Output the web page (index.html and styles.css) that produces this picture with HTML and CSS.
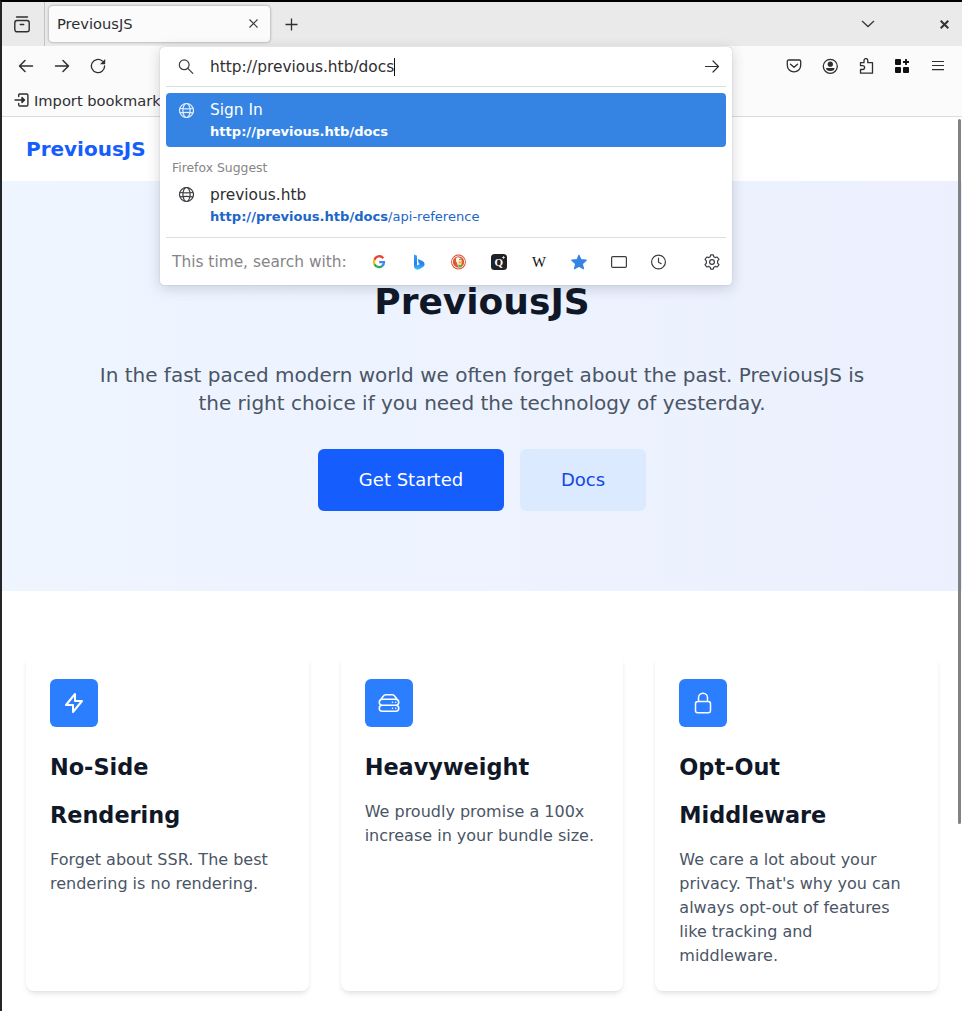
FILE: index.html
```html
<!DOCTYPE html>
<html lang="en">
<head>
<meta charset="utf-8">
<title>PreviousJS</title>
<link rel="stylesheet" href="styles.css">
</head>
<body>
<div class="window">
  <div class="tabbar">
    <div class="view-btn">
      <svg width="16" height="17" viewBox="0 0 16 17" fill="none" stroke="#2f2f33" stroke-width="1.4" stroke-linecap="round"><path d="M2.500 1h11"/><rect x=".8" y="4.500" width="14.400" height="11.300" rx="2.200"/><path d="M6.300 8.500h3.400"/></svg>
    </div>
    <div class="tab"><span>PreviousJS</span>
      <svg width="9" height="9" viewBox="0 0 9 9" stroke="#38383d" stroke-width="1.1"><path d="M.5.5l8 8M8.500.5l-8 8"/></svg>
    </div>
    <svg class="plus" width="13" height="13" viewBox="0 0 13 13" stroke="#2f2f33" stroke-width="1.3"><path d="M6.500 .5v12M.5 6.500h12"/></svg>
    <svg class="chev" width="14" height="8" viewBox="0 0 14 8" fill="none" stroke="#38383d" stroke-width="1.3"><path d="M1 1l6 5.500L13 1"/></svg>
    <svg class="close" width="9" height="9" viewBox="0 0 9 9" stroke="#2e3436" stroke-width="2"><path d="M.7.7l7.600 7.600M8.300.7L.7 8.300"/></svg>
  </div>
  <div class="toolbar">
    <div class="nav-left">
      <svg width="16" height="16" viewBox="0 0 16 16" fill="none" stroke="#2f2f33" stroke-width="1.500" stroke-linecap="round" stroke-linejoin="round"><path d="M14.500 8H1.500M7 2.500L1.500 8 7 13.500"/></svg>
      <svg width="16" height="16" viewBox="0 0 16 16" fill="none" stroke="#2f2f33" stroke-width="1.500" stroke-linecap="round" stroke-linejoin="round"><path d="M1.500 8h13M9 2.500L14.500 8 9 13.500"/></svg>
      <svg width="16" height="16" viewBox="0 0 16 16" fill="none" stroke="#2f2f33" stroke-width="1.300" stroke-linecap="round"><path d="M14.600 8A6.600 6.600 0 1 1 12.300 3"/><path d="M15.200 1v5.200H10z" fill="#2f2f33" stroke="none"/></svg>
    </div>
    <div class="nav-right">
      <svg width="16" height="16" viewBox="0 0 16 16" fill="none" stroke="#2f2f33" stroke-width="1.300" stroke-linecap="round" stroke-linejoin="round"><path d="M2.700 2h10.600q1.400 0 1.400 1.400V7.200a6.700 6.700 0 0 1-13.400 0V3.400Q1.300 2 2.700 2z"/><path d="M4.500 6.200L8 9.300l3.500-3.100"/></svg>
      <svg width="16" height="16" viewBox="0 0 16 16" fill="none" stroke="#2f2f33" stroke-width="1.300"><circle cx="8.300" cy="8.300" r="7"/><circle cx="8.300" cy="6.200" r="2.600" fill="#2f2f33" stroke="none"/><path d="M4.100 10h8.400q.2 3-4.200 3t-4.200-3z" fill="#2f2f33" stroke="none"/></svg>
      <svg width="16" height="16" viewBox="0 0 16 16" fill="none" stroke="#2f2f33" stroke-width="1.300" stroke-linejoin="round"><path d="M2.500 4.700H6V2.500a1.900 1.900 0 0 1 3.800 0v2.200h4.700v10.500h-12v-3.700h2.200a1.900 1.900 0 0 0 0-3.800H2.500z"/></svg>
      <svg width="16" height="16" viewBox="0 0 16 16" fill="#111"><rect x="1" y="1" width="6" height="6" rx="1"/><rect x="1" y="9" width="6" height="6" rx="1"/><rect x="9" y="9" width="6" height="6" rx="1"/><path d="M11.100 1h1.800v2.100H15v1.800h-2.100V7h-1.800V4.900H9V3.100h2.100z"/></svg>
      <svg width="16" height="16" viewBox="0 0 16 16" stroke="#2f2f33" stroke-width="1.200"><path d="M2 3.500h12M2 7.500h12M2 11.700h12"/></svg>
    </div>
  </div>
  <div class="bookmarks">
    <svg width="15" height="14" viewBox="0 0 15 14" fill="none" stroke="#2f2f33" stroke-width="1.400" stroke-linecap="round" stroke-linejoin="round"><path d="M4.700 3.500V2.200Q4.700 1 5.900 1h6.700q1.300 0 1.300 1.200v9.600q0 1.200-1.300 1.200H5.900q-1.200 0-1.200-1.200v-1.300M1 7h8.500"/><path d="M8 4.500L10.500 7 8 9.500z" fill="#2f2f33"/></svg>
    <span>Import bookmarks…</span>
  </div>

  <div class="urlbar">
    <div class="url-input">
      <svg width="16" height="16" viewBox="0 0 16 16" fill="none" stroke="#3c3c40" stroke-width="1.200" stroke-linecap="round"><circle cx="6.200" cy="5.800" r="4.900"/><path d="M9.800 9.400l5 5"/></svg>
      <span class="url-text">http://previous.htb/docs</span><i class="caret"></i>
      <svg class="go" width="16" height="16" viewBox="0 0 16 16" fill="none" stroke="#2f2f33" stroke-width="1.200" stroke-linecap="round" stroke-linejoin="round"><path d="M1.500 7.500h13M9 2l5.500 5.500L9 13"/></svg>
    </div>
    <div class="result selected">
      <svg width="16" height="16" viewBox="0 0 16 16" fill="none" stroke="#e4effc" stroke-width="1.200"><circle cx="8.500" cy="8.500" r="7"/><ellipse cx="8.500" cy="8.500" rx="3.600" ry="7"/><path d="M2 6.500q6.500.8 13 0M2 10.800q6.500-.8 13 0"/></svg>
      <div><div class="title">Sign In</div><div class="link"><b>http://previous.htb/docs</b></div></div>
    </div>
    <div class="suggest-label">Firefox Suggest</div>
    <div class="result">
      <svg width="16" height="16" viewBox="0 0 16 16" fill="none" stroke="#3c3c40" stroke-width="1.200"><circle cx="8.500" cy="7.500" r="7"/><ellipse cx="8.500" cy="7.500" rx="3.600" ry="7"/><path d="M2 5.500q6.500.8 13 0M2 9.800q6.500-.8 13 0"/></svg>
      <div><div class="title">previous.htb</div><div class="link"><b>http://previous.htb/docs</b>/api-reference</div></div>
    </div>
    <div class="engines">
      <span class="engines-label">This time, search with:</span>
      <svg width="16" height="16" viewBox="0 0 16 16" fill="none" stroke-width="2.300"><path d="M12.200 4.200A5 5 0 0 0 3.500 5.800" stroke="#ea4335"/><path d="M3.500 5.700a5 5 0 0 0 0 4.600" stroke="#fbbc05"/><path d="M3.500 10.200a5 5 0 0 0 7.800 1.700" stroke="#34a853"/><path d="M8.200 8.200H13a5 5 0 0 1-1.800 3.800" stroke="#4285f4"/></svg>
      <svg width="16" height="16" viewBox="0 0 16 16"><defs><linearGradient id="bing" x1="0" y1="0" x2="0" y2="1"><stop offset="0" stop-color="#2fa5f7"/><stop offset=".6" stop-color="#2b7df0"/><stop offset="1" stop-color="#35c8f5"/></linearGradient></defs><path d="M3 .5l2.600 1.100q.4.300.4.800v9.200l3-1.700-1.400-.7L6.800 5l4.400 1.800q2.400 1 2.400 3.500 0 1.700-1.500 2.700l-3.800 2.300q-1.600.8-3.300 0Q3 14.300 3 12.400z" fill="url(#bing)"/></svg>
      <svg width="16" height="16" viewBox="0 0 16 16"><circle cx="7.500" cy="8" r="7.400" fill="#e0492a"/><circle cx="7.500" cy="8" r="6.500" fill="#fff"/><circle cx="7.500" cy="8" r="5.700" fill="#de5833"/><path d="M5 4.500q1.500-2 4-.6 2 1.300 1.700 4.200l-1 5.300-2.200.2L6 9q-1.500-2.400-1-4.500z" fill="#fff4e9"/><path d="M7.600 7.300l3.800.5-.8 1.600-3 .1z" fill="#fdb515"/><path d="M7.300 10.600l3.700.4-.8 2.300-2.700.2z" fill="#4cba3c"/><circle cx="8.900" cy="5.600" r=".7" fill="#334b79"/></svg>
      <svg width="16" height="16" viewBox="0 0 16 16"><rect width="16" height="16" rx="3.500" fill="#202124"/><text class="q-glyph" x="3.400" y="11.600">Q</text><path d="M12.500 2v3M11 3.500h3" stroke="#ddd" stroke-width=".8"/></svg>
      <svg width="16" height="16" viewBox="0 0 16 16"><text class="w-glyph" x="1" y="12.600" textLength="14" lengthAdjust="spacingAndGlyphs">W</text></svg>
      <svg width="16" height="16" viewBox="0 0 16 16" fill="#3584e4" stroke="#3584e4" stroke-linejoin="round" stroke-width="1.200"><path d="M8 1.200l2 4.500 5.200.5-3.900 3.500 1.200 5.100L8 12.200l-4.500 2.600 1.200-5.100L.8 6.200 6 5.700z"/></svg>
      <svg width="16" height="16" viewBox="0 0 16 16" fill="none" stroke="#3c3c40" stroke-width="1.200"><rect x=".6" y="2.600" width="14.800" height="10.800" rx="1.200"/></svg>
      <svg width="16" height="16" viewBox="0 0 16 16" fill="none" stroke="#3c3c40" stroke-width="1.200" stroke-linecap="round"><circle cx="7.500" cy="8" r="6.900"/><path d="M7.500 4v4.200l2.700 1.500"/></svg>
      <svg class="gear" width="16" height="16" viewBox="0 0 16 16" fill="none" stroke="#3c3c40" stroke-width="1.200" stroke-linejoin="round"><circle cx="8" cy="8" r="2.400"/><path d="M6.700.8h2.600l.5 2 1.400.8 2-.6 1.800 2.300-1.400 1.500v2.400l1.400 1.500-1.800 2.300-2-.6-1.400.8-.5 2H6.700l-.5-2-1.400-.8-2 .6L1 10.700l1.400-1.500V6.800L1 5.300 2.800 3l2 .6 1.400-.8z"/></svg>
    </div>
  </div>

  <div class="page">
    <header class="site-header">PreviousJS</header>
    <section class="hero">
      <h1>PreviousJS</h1>
      <p>In the fast paced modern world we often forget about the past. PreviousJS is the right choice if you need the technology of yesterday.</p>
      <div class="actions"><a class="btn primary">Get Started</a><a class="btn secondary">Docs</a></div>
    </section>
    <section class="features">
      <article class="card">
        <div class="icon"><svg width="24" height="24" viewBox="0 0 24 24" fill="none" stroke="#fff" stroke-width="2" stroke-linejoin="round"><path d="M13 3v7h7L11 21v-7H4z"/></svg></div>
        <h3>No-Side Rendering</h3>
        <p>Forget about SSR. The best rendering is no rendering.</p>
      </article>
      <article class="card">
        <div class="icon"><svg width="24" height="24" viewBox="0 0 24 24" fill="none" stroke="#fff" stroke-width="1.500" stroke-linecap="round" stroke-linejoin="round"><path d="M5.250 14.250h13.500a3 3 0 0 0 0-6H5.250a3 3 0 0 0 0 6zM5.250 14.250h13.500a3 3 0 0 1 0 6H5.250a3 3 0 0 1 0-6zM2.500 10.200l3.700-5Q7.200 3.750 8.700 3.750h6.600q1.500 0 2.500 1.450l3.700 5M15.500 11.250h.01M18.700 11.250h.01M15.500 17.250h.01M18.700 17.250h.01"/></svg></div>
        <h3>Heavyweight</h3>
        <p>We proudly promise a 100x increase in your bundle size.</p>
      </article>
      <article class="card">
        <div class="icon"><svg width="24" height="24" viewBox="0 0 24 24" fill="none" stroke="#fff" stroke-width="1.500" stroke-linecap="round" stroke-linejoin="round"><path d="M16.500 10.500V6.750a4.500 4.500 0 1 0-9 0v3.750m-.75 11.250h10.500a2.250 2.250 0 0 0 2.250-2.250v-6.750a2.250 2.250 0 0 0-2.250-2.250H6.750a2.250 2.250 0 0 0-2.250 2.250v6.750a2.250 2.250 0 0 0 2.250 2.250z"/></svg></div>
        <h3>Opt-Out Middleware</h3>
        <p>We care a lot about your privacy. That's why you can always opt-out of features like tracking and middleware.</p>
      </article>
    </section>
    <div class="scrollbar"></div>
  </div>
</div>
</body>
</html>
```
FILE: styles.css
```css
* { box-sizing: border-box; margin: 0; padding: 0; }
body { font-family: "DejaVu Sans", sans-serif; overflow: hidden; background: #fff; }
svg { display: block; flex: none; }
.window { position: relative; height: 1011px; overflow: hidden; border-top: 2px solid #000; border-left: 2px solid #242528; color: #2e2e32; }
.tabbar { height: 44px; display: flex; align-items: center; background: #eaeaea; padding-right: 13px; }
.view-btn { width: 43px; height: 44px; border-right: 1px solid #c2c2c2; display: flex; align-items: center; padding-left: 12px; }
.tab { width: 221px; height: 36px; margin-left: 4px; padding: 0 12px 2px 8px; border-radius: 4px; background: #fbfbfb; box-shadow: 0 0 3px rgba(0,0,0,.4); display: flex; align-items: center; justify-content: space-between; font-size: 14.67px; }
.plus { margin-left: 15px; }
.chev { margin-left: auto; margin-right: 65px; }
.toolbar { height: 40px; display: flex; align-items: center; justify-content: space-between; background: #fbfbfb; padding: 0 16px; }
.nav-left, .nav-right { display: flex; gap: 20px; }
.bookmarks { height: 31px; display: flex; align-items: center; gap: 5px; padding: 0 0 2px 12px; background: #fbfbfb; border-bottom: 1px solid #dcdcdd; font-size: 14.67px; white-space: nowrap; }
.urlbar { position: absolute; left: 158px; top: 45px; width: 572px; height: 238px; z-index: 2; background: #fff; border-radius: 4px; padding: 0 6px; box-shadow: 0 0 1px rgba(0,0,0,.35), 0 3px 14px rgba(40,45,65,.2); }
.url-input { height: 40px; display: flex; align-items: center; padding: 0 6px 0 12px; border-bottom: 1px solid #dededf; font-size: 15.400px; }
.url-text { margin-left: 16px; }
.caret { width: 1px; height: 18px; background: #111; }
.go { margin-left: auto; }
.result { height: 54px; display: flex; gap: 16px; padding: 6px 12px; border-radius: 4px; }
.result svg { margin-top: 3px; }
.title { font-size: 15.400px; line-height: 22px; }
.link { font-size: 13.070px; line-height: 22px; color: #1c66c8; }
.selected { margin-top: 6px; background: #3584e4; color: #fff; }
.selected .link { color: #fff; }
.suggest-label { height: 31px; padding: 12px 6px 0; font-size: 12.400px; line-height: 18px; color: #858587; }
.engines { height: 48px; margin-top: 5px; display: flex; align-items: center; gap: 24px; padding: 0 6px; border-top: 1px solid #dededf; }
.engines-label { width: 175px; font-size: 15.400px; color: #858587; white-space: nowrap; }
.gear { margin-left: auto; }
.q-glyph { font: bold 11px "Liberation Serif", serif; fill: #fff; }
.w-glyph { font: 14px "Liberation Serif", serif; fill: #111; }
.page { position: relative; height: 894px; background: #fff; }
.site-header { height: 64px; padding-left: 24px; font-size: 20px; font-weight: bold; line-height: 64px; color: #155dfc; }
.hero { height: 410px; padding: 81px 80px 0; text-align: center; background: linear-gradient(90deg, #eef5ff, #ecf0fe); }
.hero h1 { font-size: 36px; line-height: 80px; margin-bottom: 19px; color: #101828; }
.hero p { font-size: 20px; line-height: 28px; color: #4a5565; }
.actions { margin-top: 32px; display: flex; justify-content: center; gap: 16px; }
.btn { height: 62px; border-radius: 6px; font-size: 18px; line-height: 62px; }
.primary { width: 186px; background: #155dfc; color: #fff; }
.secondary { width: 126px; background: #dbeafe; color: #1447e6; }
.features { padding: 64px 24px; display: grid; grid-template-columns: repeat(3, 1fr); gap: 32px; }
.card { height: 336px; padding: 24px; border-radius: 8px; background: #fff; box-shadow: 0 4px 6px -1px rgba(0,0,0,.08), 0 2px 4px -2px rgba(0,0,0,.1); }
.icon { width: 48px; height: 48px; border-radius: 6px; background: #2b7fff; display: flex; align-items: center; justify-content: center; }
.card h3 { margin: 16px 0 9px; font-size: 22.400px; line-height: 48px; color: #101828; }
.card p { font-size: 16px; line-height: 24px; color: #4a5565; }
.scrollbar { position: absolute; top: 2px; right: 1px; width: 3px; height: 705px; border-radius: 2px; background: #7f8384; }
```
